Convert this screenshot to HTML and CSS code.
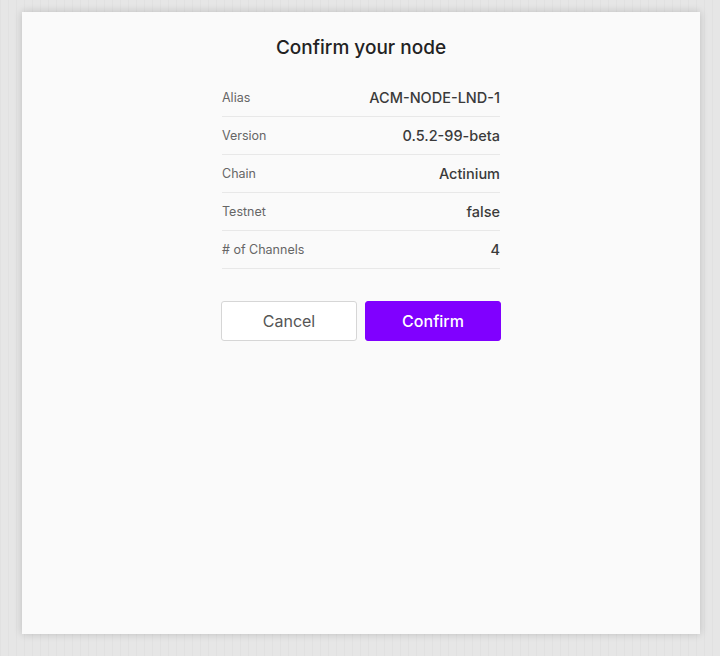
FILE: index.html
```html
<!DOCTYPE html>
<html>
<head>
<meta charset="utf-8">
<link rel="stylesheet" href="styles.css">
</head>
<body>
<div class="card">
  <h1 class="title">Confirm your node</h1>
  <div class="rows">
    <div class="row"><span class="label">Alias</span><span class="value">ACM-NODE-LND-1</span></div>
    <div class="row"><span class="label">Version</span><span class="value">0.5.2-99-beta</span></div>
    <div class="row"><span class="label">Chain</span><span class="value">Actinium</span></div>
    <div class="row"><span class="label">Testnet</span><span class="value">false</span></div>
    <div class="row"><span class="label"># of Channels</span><span class="value">4</span></div>
  </div>
  <div class="actions">
    <button class="btn btn-cancel">Cancel</button>
    <button class="btn btn-confirm">Confirm</button>
  </div>
</div>
</body>
</html>
```

FILE: styles.css
```css
* { box-sizing: border-box; }
html, body { height: 100%; }
body {
  margin: 0;
  padding: 12px 20px 22px 22px;
  background-color: #e6e6e6;
  background-image:
    repeating-linear-gradient(90deg, rgba(0,0,0,0.025) 0 1px, transparent 1px 8px);
  font-family: Inter, "Noto Sans", sans-serif;
}
.card {
  height: 622px;
  background: #fafafa;
  box-shadow: 0 0 8px rgba(0,0,0,0.18);
  display: flex;
  flex-direction: column;
  align-items: center;
  padding-top: 24px;
}
.title {
  margin: 0;
  font-size: 19px;
  line-height: 24px;
  font-weight: 500;
  color: #222;
}
.rows {
  width: 278px;
  margin-top: 19px;
  display: flex;
  flex-direction: column;
}
.row {
  height: 38px;
  display: flex;
  align-items: center;
  justify-content: space-between;
  border-bottom: 1px solid #e8e8e8;
  padding-bottom: 1px;
}
.label {
  font-size: 12.5px;
  color: #666;
}
.value {
  font-size: 14.5px;
  font-weight: 500;
  color: #3a3a3a;
}
.actions {
  margin-top: 32px;
  display: flex;
  gap: 8px;
  width: 280px;
}
.btn {
  flex: 1;
  height: 40px;
  border-radius: 3px;
  font-family: Inter, "Noto Sans", sans-serif;
  font-size: 16px;
  cursor: pointer;
}
.btn-cancel {
  background: #fff;
  border: 1px solid #d6d6d6;
  color: #555;
}
.btn-confirm {
  background: #8000ff;
  border: 1px solid #8000ff;
  color: #fff;
  font-weight: 500;
}
```
